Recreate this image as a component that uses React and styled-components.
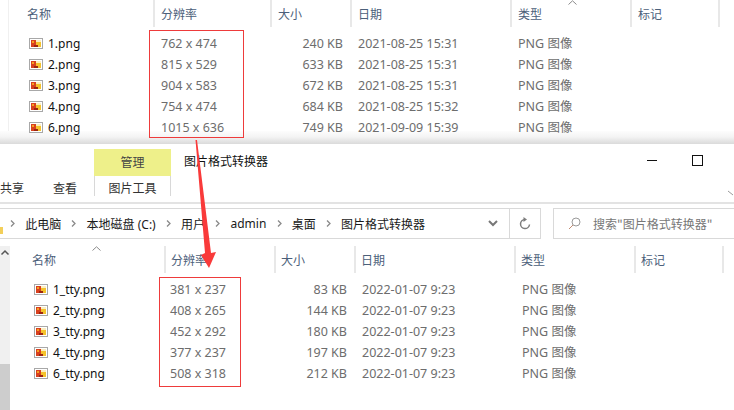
import React from 'react';
import styled, { createGlobalStyle } from 'styled-components';

const Global = createGlobalStyle`
  html, body { margin: 0; padding: 0; background: #fff; }
  body { font-family: "Noto Sans CJK SC", "Noto Sans", sans-serif; }
`

const Page = styled.div`
  position: relative;
  width: 734px;
  height: 410px;
  overflow: hidden;
  background: #fff;
`

const TopWindow = styled.div`
  height: 131px;
  margin-left: 8px;
  border-left: 1px solid #f0f0f0;
`

const Shadow = styled.div`
  height: 13px;
  background: linear-gradient(#fdfdfd, #f4f4f4 45%, #dadada);
`

const HeaderRow = styled.div`
  display: grid;
  grid-template-columns: ${props => props.$cols};
  height: ${props => props.$height}px;
`

const HeaderCell = styled.div`
  position: relative;
  font-size: 12px;
  line-height: 27px;
  color: #4c607a;
  padding-left: ${props => props.$pad}px;
  border-right: 2px solid #e8e8e8;
  box-sizing: border-box;
  white-space: nowrap;
`

const SortCaret = styled.svg`
  position: absolute;
  left: ${props => props.$left}px;
  top: 0;
  width: 9px;
  height: 5px;
`

const FileRow = styled.div`
  display: grid;
  grid-template-columns: ${props => props.$cols};
  height: 21px;
  line-height: 21px;
  color: #6d6d6d;
  white-space: nowrap;
`

const NameCell = styled.div`
  display: flex;
  align-items: center;
  gap: 5px;
  padding-left: ${props => props.$indent}px;
  color: #111;
  font-family: "Noto Sans", sans-serif;
  font-size: 12px;
`

const TextCell = styled.div`
  padding-left: ${props => props.$pad}px;
  font-family: "Noto Sans", "Noto Sans CJK SC", sans-serif;
  font-size: 12.5px;
`

const SizeCell = styled.div`
  text-align: right;
  padding-right: 9px;
  font-family: "Noto Sans", sans-serif;
  font-size: 12.5px;
`

const Rows = styled.div`
  margin-top: ${props => props.$top}px;
`

const BottomWindow = styled.div`
  display: flex;
  flex-direction: column;
  height: 266px;
`

const TitleRow = styled.div`
  display: flex;
  height: 60px;
  border-bottom: 2px solid #e3e3e3;
  box-sizing: border-box;
  margin-bottom: 4px;
  position: relative;
`

const PlainTabs = styled.div`
  display: flex;
  gap: 29px;
  width: 94px;
  padding-top: 35px;
  font-size: 12px;
  line-height: 18px;
  color: #333;
  box-sizing: border-box;
`

const ContextTab = styled.div`
  width: 77px;
  margin-top: 5px;
  display: flex;
  flex-direction: column;
`

const ManageLabel = styled.div`
  height: 27px;
  line-height: 26px;
  background: #eef08a;
  text-align: center;
  font-size: 12px;
  color: #444;
`

const ToolLabel = styled.div`
  height: 20px;
  line-height: 23px;
  text-align: center;
  font-size: 12px;
  color: #333;
  border-left: 1px solid #d8d8d8;
  border-right: 1px solid #d8d8d8;
`

const WindowTitle = styled.div`
  margin-left: 13px;
  padding-top: 8px;
  font-size: 12px;
  line-height: 18px;
  color: #111;
  flex: 1;
`

const WindowButtons = styled.div`
  display: flex;
  align-items: flex-start;
  gap: 35px;
  padding: 11px 31px 0 0;
`

const MinButton = styled.div`
  width: 10px;
  height: 1px;
  margin-top: 5px;
  background: #111;
`

const MaxButton = styled.div`
  width: 9px;
  height: 9px;
  border: 1px solid #111;
`

const RibbonChevron = styled.svg`
  position: absolute;
  right: 0;
  top: 46px;
  width: 6px;
  height: 6px;
`

const NavRow = styled.div`
  display: flex;
  height: 31px;
  gap: 12px;
`

const AddressBar = styled.div`
  display: flex;
  align-items: center;
  width: 541px;
  box-sizing: border-box;
  border: 1px solid #d9d9d9;
  border-left: 0;
  font-size: 12px;
  color: #1a1a1a;
  white-space: nowrap;
`

const FolderStub = styled.div`
  width: 3px;
  height: 7px;
  margin-top: 14px;
  background: #f3cf5a;
`

const Crumb = styled.span`
  font-family: "Noto Sans", "Noto Sans CJK SC", sans-serif;
`

const CrumbArrow = styled.svg`
  width: 5px;
  height: 7px;
  margin: 0 10.2px 0 ${props => (props.$first ? 7 : 10.2)}px;
`

const Spacer = styled.div`
  flex: 1;
`

const BarButton = styled.div`
  display: flex;
  align-items: center;
  justify-content: center;
  width: ${props => props.$width}px;
  height: 100%;
  box-sizing: border-box;
  border-left: ${props => (props.$divided ? '1px solid #d9d9d9' : '0')};
`

const SearchBox = styled.div`
  display: flex;
  align-items: center;
  flex: 1;
  gap: 12px;
  padding-left: 14px;
  border: 1px solid #d9d9d9;
  border-right: 0;
  font-size: 12px;
  color: #777;
  white-space: nowrap;
`

const ListArea = styled.div`
  display: flex;
  flex: 1;
  margin-top: 7px;
`

const ScrollTrack = styled.div`
  display: flex;
  flex-direction: column;
  justify-content: space-between;
  width: 10px;
  background: #f0f0f0;
  margin-right: 2px;
`

const ScrollUp = styled.svg`
  width: 10px;
  height: 16px;
`

const ScrollThumb = styled.div`
  height: 46px;
  background: #cdcdcd;
`

const ListBody = styled.div`
  flex: 1;
`

const RedBox = styled.div`
  position: absolute;
  left: ${props => props.$left}px;
  top: ${props => props.$top}px;
  width: ${props => props.$width}px;
  height: ${props => props.$height}px;
  border: 1px solid #ee3b3b;
  box-sizing: border-box;
`

const Arrow = styled.svg`
  position: absolute;
  left: 190px;
  top: 134px;
  width: 30px;
  height: 136px;
`

const Icon = () => (
  <svg width="14" height="11" viewBox="0 0 14 11">
    <rect x="0.5" y="0.5" width="13" height="10" fill="#fff" stroke="#a8a8a8" />
    <rect x="2" y="2" width="10" height="7" fill="#fbeec0" />
    <rect x="2" y="2" width="5" height="7" fill="#d8401e" />
    <rect x="7" y="4" width="5" height="5" fill="#f5c32c" />
    <rect x="3" y="3" width="2" height="2" fill="#f7a11f" />
    <rect x="5" y="7" width="4" height="2" fill="#9c2410" />
  </svg>
)

const topCols = '146px 117px 80px 160px 120px 88px';
const bottomCols = '154px 110px 80px 160px 120px 88px';

const columns = ['名称', '分辨率', '大小', '日期', '类型', '标记'];

const topFiles = [
  ['1.png', '762 x 474', '240 KB', '2021-08-25 15:31'],
  ['2.png', '815 x 529', '633 KB', '2021-08-25 15:31'],
  ['3.png', '904 x 583', '672 KB', '2021-08-25 15:31'],
  ['4.png', '754 x 474', '684 KB', '2021-08-25 15:32'],
  ['6.png', '1015 x 636', '749 KB', '2021-09-09 15:39'],
];

const bottomFiles = [
  ['1_tty.png', '381 x 237', '83 KB', '2022-01-07 9:23'],
  ['2_tty.png', '408 x 265', '144 KB', '2022-01-07 9:23'],
  ['3_tty.png', '452 x 292', '180 KB', '2022-01-07 9:23'],
  ['4_tty.png', '377 x 237', '197 KB', '2022-01-07 9:23'],
  ['6_tty.png', '508 x 318', '212 KB', '2022-01-07 9:23'],
];

const crumbs = ['此电脑', '本地磁盘 (C:)', '用户', 'admin', '桌面', '图片格式转换器'];

const Caret = ({ left }) => (
  <SortCaret $left={left} viewBox="0 0 9 5">
    <path d="M0.5 4.5 L4.5 0.8 L8.5 4.5" fill="none" stroke="#8a8a8a" />
  </SortCaret>
);

const FileList = ({ files, cols, indent, top, resPad }) => (
  <Rows $top={top}>
    {files.map(file => (
      <FileRow key={file[0]} $cols={cols}>
        <NameCell $indent={indent}><Icon />{file[0]}</NameCell>
        <TextCell $pad={resPad}>{file[1]}</TextCell>
        <SizeCell>{file[2]}</SizeCell>
        <TextCell $pad={6}>{file[3]}</TextCell>
        <TextCell $pad={6}>PNG 图像</TextCell>
        <div />
      </FileRow>
    ))}
  </Rows>
);

export default function App() {
  return (
    <Page>
      <Global />
      <TopWindow>
        <HeaderRow $cols={topCols} $height={27}>
          {columns.map((name, i) => (
            <HeaderCell key={name} $pad={i === 0 ? 18 : 6}>
              {name}
              {name === '类型' && <Caret left={56} />}
            </HeaderCell>
          ))}
        </HeaderRow>
        <FileList files={topFiles} cols={topCols} indent={20} top={6} resPad={6} />
      </TopWindow>
      <Shadow />
      <BottomWindow>
        <TitleRow>
          <PlainTabs>
            <span>共享</span>
            <span>查看</span>
          </PlainTabs>
          <ContextTab>
            <ManageLabel>管理</ManageLabel>
            <ToolLabel>图片工具</ToolLabel>
          </ContextTab>
          <WindowTitle>图片格式转换器</WindowTitle>
          <WindowButtons>
            <MinButton />
            <MaxButton />
          </WindowButtons>
          <RibbonChevron viewBox="0 0 6 6">
            <path d="M0 1 L5 5" fill="none" stroke="#999" />
          </RibbonChevron>
        </TitleRow>
        <NavRow>
          <AddressBar>
            <FolderStub />
            {crumbs.map((crumb, i) => (
              <React.Fragment key={crumb}>
                <CrumbArrow $first={i === 0} viewBox="0 0 5 7">
                  <path d="M1 0.5 L4 3.5 L1 6.5" fill="none" stroke="#8a8a8a" strokeWidth="1.3" />
                </CrumbArrow>
                <Crumb>{crumb}</Crumb>
              </React.Fragment>
            ))}
            <Spacer />
            <BarButton $width={32}>
              <svg width="10" height="7" viewBox="0 0 10 7">
                <path d="M1 1 L5 5 L9 1" fill="none" stroke="#777" strokeWidth="2" />
              </svg>
            </BarButton>
            <BarButton $width={31} $divided>
              <svg width="12" height="13" viewBox="0 0 12 13">
                <path d="M6 2.5 A4.5 4.5 0 1 0 10.5 7.5" fill="none" stroke="#7d7d7d" strokeWidth="1.5" />
                <path d="M4.5 0 L8 2.5 L4.5 5 Z" fill="#7d7d7d" />
              </svg>
            </BarButton>
          </AddressBar>
          <SearchBox>
            <svg width="13" height="13" viewBox="0 0 13 13">
              <circle cx="8" cy="5" r="4" fill="none" stroke="#9a9a9a" />
              <path d="M5 8 L1 12" stroke="#c08a70" />
            </svg>
            搜索"图片格式转换器"
          </SearchBox>
        </NavRow>
        <ListArea>
          <ScrollTrack>
            <ScrollUp viewBox="0 0 10 16">
              <path d="M1.5 8.5 L5 5 L8.5 8.5" fill="none" stroke="#555" strokeWidth="1.5" />
            </ScrollUp>
            <ScrollThumb />
          </ScrollTrack>
          <ListBody>
            <HeaderRow $cols={bottomCols} $height={24}>
              {columns.map((name, i) => (
                <HeaderCell key={name} $pad={i === 0 ? 20 : 5}>
                  {name}
                  {name === '名称' && <Caret left={80} />}
                </HeaderCell>
              ))}
            </HeaderRow>
            <FileList files={bottomFiles} cols={bottomCols} indent={22} top={9} resPad={4} />
          </ListBody>
        </ListArea>
      </BottomWindow>
      <RedBox $left={149} $top={30} $width={95} $height={108} />
      <RedBox $left={159} $top={277} $width={82} $height={110} />
      <Arrow viewBox="0 0 30 136">
        <path d="M5.5 6 L7 6 L21 119 L26 118 L19 134 L11 121 L15 119 Z" fill="#f93a3a" />
      </Arrow>
    </Page>
  );
}
